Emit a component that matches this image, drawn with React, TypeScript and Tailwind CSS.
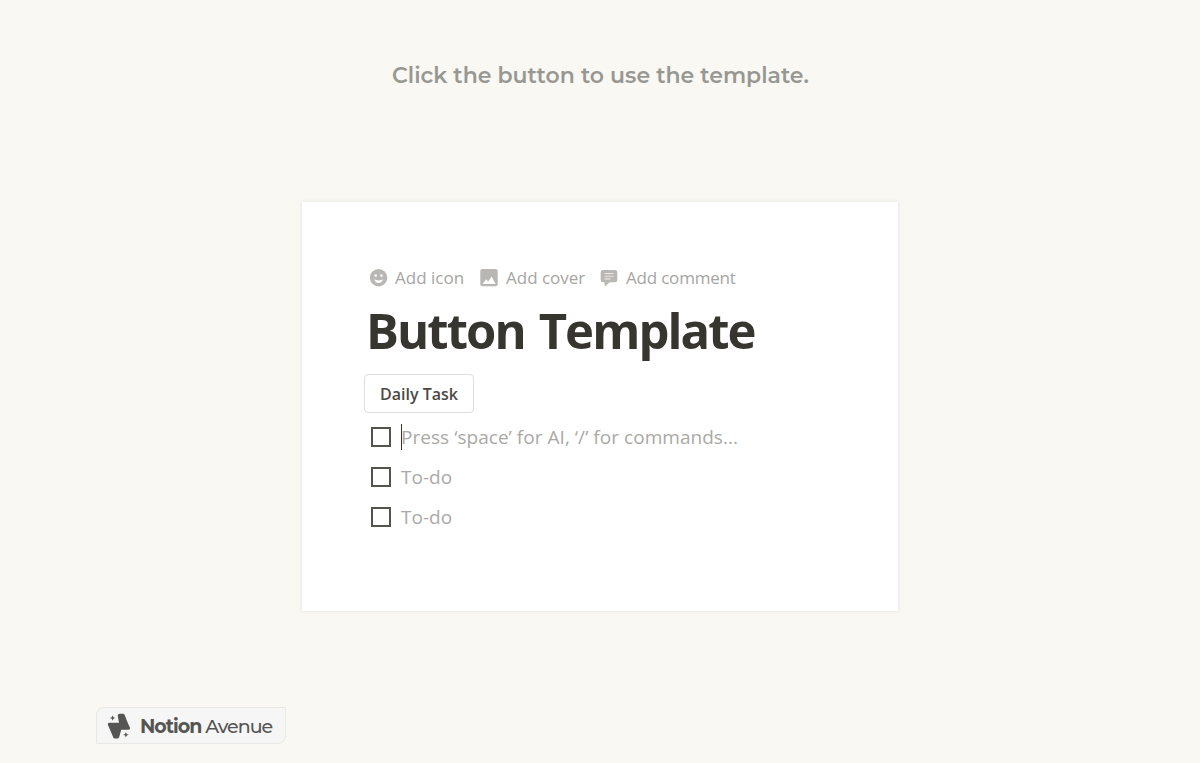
const todos = [
  { text: 'Press ‘space’ for AI, ‘/’ for commands...', active: true },
  { text: 'To-do', active: false },
  { text: 'To-do', active: false },
];

const SmileIcon = () => (
  <svg className="h-[18px] w-[18px]" viewBox="0 0 18 18">
    <circle cx="8.600" cy="8.700" r="8.7" fill="#b8b7b4" />
    <circle cx="5.700" cy="6.600" r="1.300" fill="#fff" />
    <circle cx="11.500" cy="6.600" r="1.300" fill="#fff" />
    <path d="M4 10c1.200 1 2.800 1.400 4.600 1.400s3.400-.4 4.600-1.400c-.4 2.400-2.300 3.900-4.600 3.900S4.400 12.400 4 10z" fill="#fff" />
  </svg>
);

const CoverIcon = () => (
  <svg className="h-[18px] w-[18px]" viewBox="0 0 18 18">
    <rect x=".3" y=".1" width="17.4" height="17.2" rx="2" fill="#b8b7b4" />
    <path d="M2.600 15l3.500-4.700 2.100 2.200L11.600 7.500 15.600 15z" fill="#fff" />
  </svg>
);

const CommentIcon = () => (
  <svg className="h-[18px] w-[18px]" viewBox="0 0 18 18">
    <path
      d="M3 1h12a2.300 2.300 0 0 1 2.300 2.300v7.700a2.300 2.300 0 0 1-2.300 2.300H9.500L5.500 17c-.5.400-.9.200-.9-.4v-3.300H3A2.300 2.300 0 0 1 .7 11V3.300A2.300 2.300 0 0 1 3 1z"
      fill="#b8b7b4"
    />
    <path d="M4.500 4.500h9M4.500 7.200h9M4.500 9.900h6" stroke="#e8e8e6" strokeWidth="1.100" />
  </svg>
);

const actions = [
  { label: 'Add icon', icon: SmileIcon, width: 'w-[110px] gap-[7px]' },
  { label: 'Add cover', icon: CoverIcon, width: 'w-[120px] gap-2' },
  { label: 'Add comment', icon: CommentIcon, width: 'w-[140px] gap-2 tracking-[-0.2px]' },
];

const BrandMark = () => (
  <svg className="h-[26px] w-6 shrink-0" viewBox="0 0 24 26" fill="#555554">
    <path d="M12.700.8h3c1.100 0 1.700.5 2.100 1.500l2.600 6.800 2.500 5.400c.5 1.200-.1 2.200-1.400 2.200h-7.300l-1.900 7c-.3 1.200-1.200 1.900-2.400 1.900H8.200c-1.100 0-1.700-.5-2.100-1.500L1 11.900C.5 10.700 1 9.700 2.300 9.700h9.700L10.800 3.200C10.500 1.800 11.300.8 12.700.8z" />
    <path d="M5.600 2.200l.8 2 2 .8-2 .8-.8 2-.8-2-2-.8 2-.8z" />
    <path d="M18.900 18.900l.8 2 2 .8-2 .8-.8 2-.8-2-2-.8 2-.8z" />
  </svg>
);

const TemplateCard = () => (
  <section className="h-[409px] w-[596px] bg-white pt-[66px] pl-[67px] font-['Open_Sans',sans-serif] shadow-[0_0_4px_rgba(80,75,60,0.13)]">
    <div className="ml-px flex h-5 items-center text-[17px] text-[#a6a5a2]">
      {actions.map(({ label, icon: Icon, width }) => (
        <div key={label} className={`flex items-center whitespace-nowrap ${width}`}>
          <Icon />
          <span>{label}</span>
        </div>
      ))}
    </div>

    <h1 className="mt-2 -ml-[3px] h-[70px] text-[49px] leading-[69px] font-bold tracking-[-1.9px] [word-spacing:3px] whitespace-nowrap text-[#37352f]">
      Button Template
    </h1>

    <button className="mt-2 -ml-[5px] flex h-[39px] w-[110px] items-center justify-center rounded border border-[#dededc] text-[16px] font-semibold whitespace-nowrap text-[#4b4944]">
      Daily Task
    </button>

    <ul className="mt-1">
      {todos.map((todo, index) => (
        <li key={index} className="flex h-10 items-center pl-0.5 text-[19px] whitespace-nowrap text-[#aaa9a6]">
          <span className="h-5 w-5 border-2 border-[#55534d]" />
          <span className={`ml-2.5 h-[26px] w-px ${todo.active ? 'bg-[#37352f]' : ''}`} />
          <span className={todo.active ? '-ml-px tracking-[0.04px]' : '-ml-px'}>{todo.text}</span>
        </li>
      ))}
    </ul>
  </section>
);

const App = () => {
  return (
    <main className="flex h-[763px] w-[1200px] flex-col items-center overflow-hidden bg-[#f9f8f3]">
      <p className="mt-[60px] ml-px h-8 font-['Montserrat','Inter',sans-serif] text-[22px] leading-8 font-semibold whitespace-nowrap text-[#989893]">
        Click the button to use the template.
      </p>

      <div className="mt-[110px]">
        <TemplateCard />
      </div>

      <footer className="mt-[96px] ml-24 flex h-[37px] w-[190px] items-center self-start rounded-tl-lg rounded-br-lg border border-[#e8e8e4] bg-[#f6f6f6] pl-2.5 font-['Montserrat','Inter',sans-serif] text-[19px] whitespace-nowrap text-[#555554]">
        <BrandMark />
        <span className="mt-[3px] ml-[9px] tracking-[-1px]">
          <b className="font-bold">Notion</b> <span className="font-medium">Avenue</span>
        </span>
      </footer>
    </main>
  );
};

export default App;
